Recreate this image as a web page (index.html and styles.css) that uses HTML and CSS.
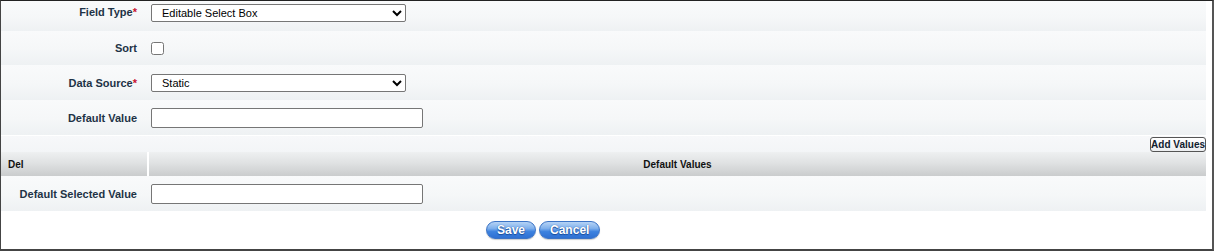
FILE: index.html
```html
<!DOCTYPE html>
<html>
<head>
<meta charset="utf-8">
<link rel="stylesheet" href="styles.css">
</head>
<body>
<div class="panel">
  <div class="row row-first">
    <div class="label">Field Type<span class="req">*</span></div>
    <div class="field">
      <select class="sel"><option>Editable Select Box</option></select>
    </div>
  </div>
  <div class="row">
    <div class="label">Sort</div>
    <div class="field"><input type="checkbox" class="chk"></div>
  </div>
  <div class="row row-35">
    <div class="label">Data Source<span class="req">*</span></div>
    <div class="field">
      <select class="sel"><option>Static</option></select>
    </div>
  </div>
  <div class="row row-35">
    <div class="label">Default Value</div>
    <div class="field"><input type="text" class="txt"></div>
  </div>
  <div class="add-row">
    <button class="btn-add">Add Values</button>
  </div>
  <div class="grid-head">
    <div class="h-del">Del</div>
    <div class="h-val">Default Values</div>
  </div>
  <div class="row row-35">
    <div class="label">Default Selected Value</div>
    <div class="field"><input type="text" class="txt"></div>
  </div>
  <div class="actions">
    <button class="btn-blue">Save</button>
    <button class="btn-blue">Cancel</button>
  </div>
</div>
</body>
</html>
```

FILE: styles.css
```css
html, body {
  margin: 0;
  padding: 0;
  background: #fff;
}

.panel {
  box-sizing: border-box;
  width: 1214px;
  height: 251px;
  border-top: 1px solid #222;
  border-left: 1px solid #444;
  border-right: 2px solid #555;
  border-bottom: 2px solid #444;
  font-family: "Liberation Sans", Arial, sans-serif;
  background: #fff;
  overflow: hidden;
}

.row {
  display: flex;
  align-items: center;
  height: 34px;
  margin-right: 6px;
  background: linear-gradient(to bottom, #f9fafb 0%, #f5f7f8 55%, #eef1f3 100%);
}

.row-first {
  height: 30px;
  align-items: flex-start;
}

.row-first .label {
  padding-top: 5px;
}

.row-first .field {
  padding-top: 3px;
}

.row-35 {
  height: 35px;
}

.label {
  width: 148px;
  box-sizing: border-box;
  padding-right: 12px;
  text-align: right;
  font-size: 11px;
  font-weight: bold;
  color: #1e3346;
}

.req {
  color: #c8102e;
}

.field {
  padding-left: 2px;
  display: flex;
  align-items: center;
}

.sel {
  width: 255px;
  height: 18px;
  font-family: "Liberation Sans", Arial, sans-serif;
  font-size: 11px;
  color: #000;
  border: 1px solid #767676;
  border-radius: 2px;
  background: #fff;
  padding: 0 0 0 6px;
  margin: 0;
}

.chk {
  width: 13px;
  height: 13px;
  margin: 0;
}

.txt {
  box-sizing: border-box;
  width: 272px;
  height: 20px;
  border: 1px solid #767676;
  border-radius: 2px;
  margin: 0;
  padding: 1px 3px;
  font-size: 11px;
}

.add-row {
  display: flex;
  justify-content: flex-end;
  align-items: flex-start;
  height: 16px;
  margin-right: 6px;
  border-top: 1px solid #fff;
  background: linear-gradient(to bottom, #f7f8fa, #f3f5f7);
}

.btn-add {
  box-sizing: border-box;
  height: 15px;
  margin-top: 1px;
  padding: 0;
  font-family: "Liberation Sans", Arial, sans-serif;
  font-size: 10px;
  font-weight: bold;
  color: #10202e;
  background: linear-gradient(to bottom, #ffffff, #eceef0);
  border: 1px solid #555;
  border-radius: 3px;
  line-height: 12px;
}

.grid-head {
  display: flex;
  height: 24px;
  margin-right: 6px;
  font-size: 10px;
  font-weight: bold;
  color: #111;
}

.h-del,
.h-val {
  display: flex;
  align-items: center;
  background: linear-gradient(to bottom, #eef0f1 0%, #e0e2e3 45%, #cacccd 100%);
}

.h-del {
  width: 148px;
  padding-left: 7px;
  box-sizing: border-box;
  border-right: 2px solid #fff;
}

.h-val {
  flex: 1;
  justify-content: center;
}

.actions {
  display: flex;
  gap: 3px;
  padding-top: 10px;
  padding-left: 485px;
}

.btn-blue {
  height: 18px;
  padding: 0 10px;
  border: 1px solid #3c74c6;
  border-radius: 9px;
  background: linear-gradient(to bottom, #b6d3f5 0%, #7fb0ec 40%, #3d82df 60%, #2f70d2 100%);
  color: #fff;
  font-family: "Liberation Sans", Arial, sans-serif;
  font-size: 12px;
  font-weight: bold;
  text-shadow: 0 0 1px #1d4d9a, 0 1px 1px #1d4d9a;
  line-height: 16px;
  box-shadow: 0 1px 1px rgba(0, 0, 0, 0.2);
}
```
